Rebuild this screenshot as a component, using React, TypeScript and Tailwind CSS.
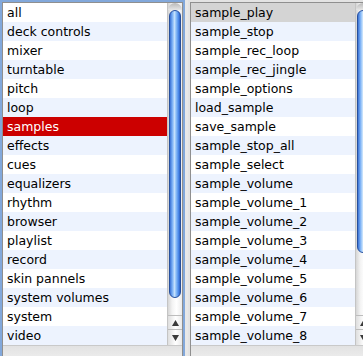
import React from "react"

const categories = [
  "all",
  "deck controls",
  "mixer",
  "turntable",
  "pitch",
  "loop",
  "samples",
  "effects",
  "cues",
  "equalizers",
  "rhythm",
  "browser",
  "playlist",
  "record",
  "skin pannels",
  "system volumes",
  "system",
  "video",
]

const actions = [
  "sample_play",
  "sample_stop",
  "sample_rec_loop",
  "sample_rec_jingle",
  "sample_options",
  "load_sample",
  "save_sample",
  "sample_stop_all",
  "sample_select",
  "sample_volume",
  "sample_volume_1",
  "sample_volume_2",
  "sample_volume_3",
  "sample_volume_4",
  "sample_volume_5",
  "sample_volume_6",
  "sample_volume_7",
  "sample_volume_8",
]

type ScrollbarProps = {
  thumbClass: string
}

const Scrollbar: React.FC<ScrollbarProps> = ({ thumbClass }) => {
  return (
    <div className="w-[15px] flex flex-col border-l border-[#c4c4c4] bg-[linear-gradient(to_right,#d6d6d6,#f3f3f3_30%,#ffffff_60%,#ececec)]">
      <div className="h-[7px] rounded-t-[7px] bg-[linear-gradient(to_bottom,#b9b9b9,#e6e6e6)]" />
      <div
        className={`${thumbClass} mx-[1px] rounded-full border border-[#27509e] bg-[linear-gradient(to_right,#3a72d6,#7fb3f5_25%,#c4e0fc_45%,#8ec0f8_60%,#4a88e8_85%,#2f63c4)]`}
      />
      <div className="flex-1" />
      <div className="h-[14px] flex items-center justify-center border-t border-[#bdbdbd] bg-[linear-gradient(to_right,#dedede,#ffffff_55%,#e9e9e9)]">
        <svg width="7" height="6" viewBox="0 0 7 6">
          <polygon points="3.5,0 7,6 0,6" fill="#3a3a3a" />
        </svg>
      </div>
      <div className="h-[16px] flex items-center justify-center border-t border-[#bdbdbd] bg-[linear-gradient(to_right,#dedede,#ffffff_55%,#e9e9e9)]">
        <svg width="7" height="6" viewBox="0 0 7 6">
          <polygon points="0,0 7,0 3.5,6" fill="#3a3a3a" />
        </svg>
      </div>
    </div>
  )
}

type ListBoxProps = {
  items: string[]
  selected: number
  focused: boolean
  thumbClass: string
}

const ListBox: React.FC<ListBoxProps> = ({ items, selected, focused, thumbClass }) => {
  return (
    <div
      className={`w-[185px] h-[370px] shrink-0 border-2 ${
        focused ? "border-[#82a8db]" : "border-[#e3e3e3]"
      }`}
    >
      <div className="h-full border border-[#8f8f8f] bg-white flex flex-col">
        <div className="flex h-[342px]">
          <div className="flex-1">
            {items.map((item, i) => {
              const isSel = i === selected
              let rowClass = i % 2 === 0 ? "bg-white text-black" : "bg-[#edf3fe] text-black"
              if (isSel) {
                rowClass = focused ? "bg-[#cc0000] text-white" : "bg-[#d4d4d4] text-black"
              }
              return (
                <div
                  key={item}
                  className={`h-[19px] leading-[19px] pl-[4px] whitespace-nowrap text-[12.5px] font-['DejaVu_Sans',sans-serif] ${rowClass}`}
                >
                  {item}
                </div>
              )
            })}
          </div>
          <Scrollbar thumbClass={thumbClass} />
        </div>
        <div className="flex-1 border-t border-[#c9c9c9] bg-[linear-gradient(to_bottom,#e2e2e2,#f4f4f4)]" />
      </div>
    </div>
  )
}

export default function App() {
  return (
    <div className="w-[363px] h-[356px] overflow-hidden bg-[#e8e8e8] flex gap-[3px]">
      <ListBox items={categories} selected={6} focused={true} thumbClass="h-[288px]" />
      <ListBox items={actions} selected={0} focused={false} thumbClass="h-[243px]" />
    </div>
  )
}
